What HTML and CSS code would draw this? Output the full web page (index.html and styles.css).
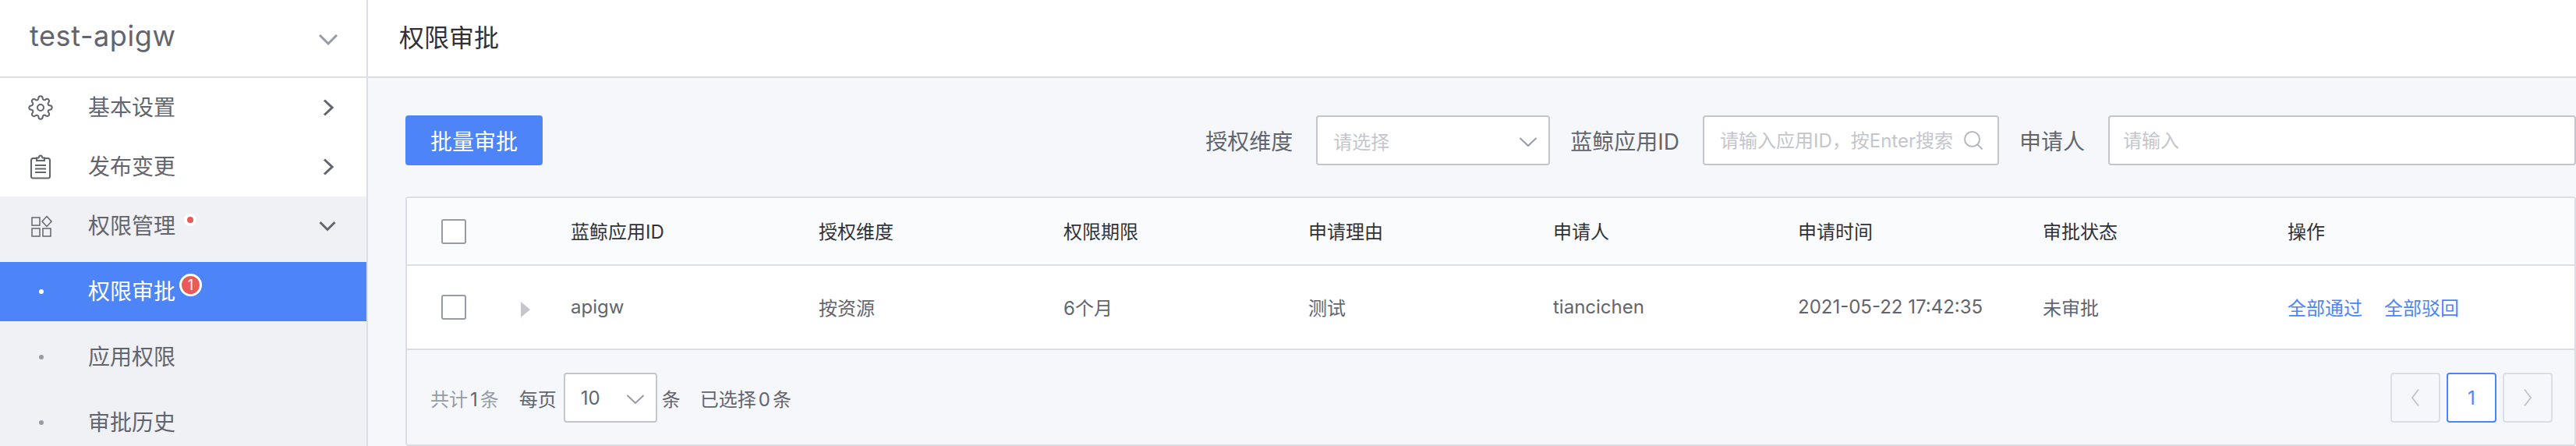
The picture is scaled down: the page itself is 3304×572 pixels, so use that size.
FILE: index.html
```html
<!DOCTYPE html>
<html lang="zh-CN">
<head>
    <meta charset="UTF-8">
    <title>权限审批</title>
    <link rel="stylesheet" href="styles.css">
</head>
<body>
<div class="page">
    <div class="side">
        <div class="side-head">
            <span class="app-name">test-apigw</span>
            <svg class="arrow-head" viewBox="0 0 24 14"><path d="M1 1l11 11L23 1"/></svg>
        </div>
        <div class="menu">
            <div class="menu-item">
                <svg class="menu-icon" viewBox="0 0 24 24"><circle cx="12" cy="12" r="3"/><path d="M19.4 15a1.65 1.65 0 0 0 .33 1.82l.06.06a2 2 0 0 1 0 2.83 2 2 0 0 1-2.83 0l-.06-.06a1.65 1.65 0 0 0-1.82-.33 1.65 1.65 0 0 0-1 1.51V21a2 2 0 0 1-2 2 2 2 0 0 1-2-2v-.09A1.65 1.65 0 0 0 9 19.4a1.65 1.65 0 0 0-1.82.33l-.06.06a2 2 0 0 1-2.83 0 2 2 0 0 1 0-2.83l.06-.06a1.65 1.65 0 0 0 .33-1.82 1.65 1.65 0 0 0-1.51-1H3a2 2 0 0 1-2-2 2 2 0 0 1 2-2h.09A1.65 1.65 0 0 0 4.6 9a1.65 1.65 0 0 0-.33-1.82l-.06-.06a2 2 0 0 1 0-2.83 2 2 0 0 1 2.83 0l.06.06a1.65 1.65 0 0 0 1.82.33H9a1.65 1.65 0 0 0 1-1.51V3a2 2 0 0 1 2-2 2 2 0 0 1 2 2v.09a1.65 1.65 0 0 0 1 1.51 1.65 1.65 0 0 0 1.82-.33l.06-.06a2 2 0 0 1 2.83 0 2 2 0 0 1 0 2.83l-.06.06a1.65 1.65 0 0 0-.33 1.82V9a1.65 1.65 0 0 0 1.51 1H21a2 2 0 0 1 2 2 2 2 0 0 1-2 2h-.09a1.65 1.65 0 0 0-1.51 1z"/></svg>
                <span class="menu-text">基本设置</span>
                <svg class="arrow-right" viewBox="0 0 14 22"><path d="M2 1.5l10 9.5-10 9.5"/></svg>
            </div>
            <div class="menu-item">
                <svg class="menu-icon" viewBox="0 0 32 32"><path d="M11 5H6.5Q4 5 4 7.500V28q0 2.500 2.500 2.500h19Q28 30.500 28 28V7.500Q28 5 25.500 5H21"/><path d="M11 8V4.500h2.500Q14 1.500 16 1.500t2.500 3H21V8z"/><path d="M9 14h14M9 18.500h14M9 23h14"/></svg>
                <span class="menu-text">发布变更</span>
                <svg class="arrow-right" viewBox="0 0 14 22"><path d="M2 1.500l10 9.500-10 9.500"/></svg>
            </div>
            <div class="menu-group">
                <div class="menu-item">
                    <svg class="menu-icon" viewBox="0 0 32 32"><path d="M5 5h10v10H5zM5 19h10v10H5zM19 19h10v10H19zM24 3.500l6 6.500-6 6.500-6-6.500z"/></svg>
                    <span class="menu-text">权限管理<i class="red-dot"></i></span>
                    <svg class="arrow-down" viewBox="0 0 22 14"><path d="M1.500 2l9.500 9.500L20.500 2"/></svg>
                </div>
                <div class="sub-item active">
                    <i class="sub-dot"></i>
                    <span class="menu-text">权限审批<b class="badge">1</b></span>
                </div>
                <div class="sub-item">
                    <i class="sub-dot"></i>
                    <span class="menu-text">应用权限</span>
                </div>
                <div class="sub-item">
                    <i class="sub-dot"></i>
                    <span class="menu-text">审批历史</span>
                </div>
            </div>
        </div>
    </div>
    <div class="main">
        <div class="main-head">权限审批</div>
        <div class="content">
            <div class="tools">
                <button class="btn">批量审批</button>
                <div class="filters">
                    <label class="filter-label">授权维度</label>
                    <div class="select filter-select">
                        <span class="holder">请选择</span>
                        <svg class="select-arrow" viewBox="0 0 24 12"><path d="M1.500 1l10.500 10L22.500 1"/></svg>
                    </div>
                    <label class="filter-label">蓝鲸应用ID</label>
                    <div class="input input-id">
                        <input type="text" placeholder="请输入应用ID，按Enter搜索">
                        <svg class="search" viewBox="0 0 26 26"><circle cx="11.500" cy="11.500" r="9.500"/><path d="M18.500 18.500l6 6"/></svg>
                    </div>
                    <label class="filter-label">申请人</label>
                    <div class="input input-user">
                        <input type="text" placeholder="请输入">
                    </div>
                </div>
            </div>
            <div class="panel">
                <table class="list">
                    <colgroup>
                        <col class="col-check">
                        <col class="col-expand">
                        <col class="col-id">
                        <col class="col-n"><col class="col-n"><col class="col-n">
                        <col class="col-n"><col class="col-n"><col class="col-n">
                        <col>
                    </colgroup>
                    <thead>
                    <tr>
                        <th class="cell-check"><i class="check"></i></th>
                        <th></th>
                        <th>蓝鲸应用ID</th>
                        <th>授权维度</th>
                        <th>权限期限</th>
                        <th>申请理由</th>
                        <th>申请人</th>
                        <th>申请时间</th>
                        <th>审批状态</th>
                        <th>操作</th>
                    </tr>
                    </thead>
                    <tbody>
                    <tr>
                        <td class="cell-check"><i class="check"></i></td>
                        <td class="cell-expand"><i class="tri"></i></td>
                        <td>apigw</td>
                        <td>按资源</td>
                        <td>6个月</td>
                        <td>测试</td>
                        <td>tiancichen</td>
                        <td>2021-05-22 17:42:35</td>
                        <td>未审批</td>
                        <td><a class="link">全部通过</a><a class="link">全部驳回</a></td>
                    </tr>
                    </tbody>
                </table>
                <div class="foot">
                    <span class="total">共计<em>1</em>条</span>
                    <span class="per">每页</span>
                    <div class="select size-select">
                        <span>10</span>
                        <svg class="select-arrow" viewBox="0 0 24 12"><path d="M1.500 1l10.500 10L22.500 1"/></svg>
                    </div>
                    <span class="unit">条</span>
                    <span class="picked">已选择<em>0</em>条</span>
                    <div class="pager">
                        <span class="page-btn"><svg viewBox="0 0 12 24"><path d="M10 1.500L2 12l8 10.500"/></svg></span>
                        <span class="page-btn current">1</span>
                        <span class="page-btn"><svg viewBox="0 0 12 24"><path d="M2 1.500L10 12 2 22.500"/></svg></span>
                    </div>
                </div>
            </div>
        </div>
    </div>
</div>
</body>
</html>
```

FILE: styles.css
```css
*{box-sizing:border-box;}
html,body{margin:0;height:100%;overflow:hidden;}
body{font-family:Inter,"Noto Sans CJK SC",sans-serif;color:#63656e;font-size:24px;background:#f5f7fb;}
em,i,b{font-style:normal;}
svg{fill:none;stroke:currentColor;display:block;}
.page{display:flex;width:3304px;height:572px;overflow:hidden;}

/* side menu */
.side{width:472px;flex:none;height:100%;background:#fff;border-right:2px solid #dcdee5;}
.side-head{height:100px;border-bottom:2px solid #dcdee5;display:flex;align-items:center;justify-content:space-between;padding:0 37px 6px 38px;font-size:36px;color:#63656e;}
.app-name{letter-spacing:.6px;}
.arrow-head{width:24px;height:14px;stroke:#979ba5;stroke-width:3;margin-top:10px;}
.menu-item{height:76px;display:flex;align-items:center;position:relative;padding-left:36px;}
.menu-icon{width:32px;height:32px;flex:none;stroke-width:2;}
.menu-item .menu-icon{stroke:#63656e;}
.menu-item:nth-child(1) .menu-icon{stroke-width:1.500;}
.menu-text{font-size:28px;line-height:40px;margin-left:45px;position:relative;}
.arrow-right{width:14px;height:22px;position:absolute;left:414px;top:27px;stroke-width:3;stroke:#63656e;}
.arrow-down{width:22px;height:14px;position:absolute;left:409px;top:31px;stroke-width:3;stroke:#63656e;}
.menu-group{background:#f0f1f5;height:320px;}
.menu-group .menu-item{margin-bottom:8px;}
.sub-item{height:76px;margin-bottom:8px;display:flex;align-items:center;padding-left:50px;}
.sub-item .menu-text{margin-left:57px;}
.sub-dot{width:6px;height:6px;border-radius:50%;background:#979ba5;flex:none;}
.sub-item.active{background:#4d85f9;color:#fff;}
.active .sub-dot{background:#fff;}
.red-dot{position:absolute;left:123px;top:4px;width:16px;height:16px;border-radius:50%;background:#ea5b58;border:4px solid #fff;}
.badge{position:absolute;left:117px;top:-3px;width:29px;height:29px;border-radius:50%;background:#ea5b58;border:3px solid #fff;color:#fff;font-size:18px;font-weight:400;line-height:23px;text-align:center;}

/* main */
.main{flex:1;min-width:0;}
.main-head{height:100px;background:#fff;border-bottom:2px solid #dcdee5;padding:0 40px 6px;display:flex;align-items:center;font-size:32px;color:#313238;}
.content{padding:48px 0 0 48px;}
.tools{display:flex;justify-content:space-between;height:64px;}
.btn{width:176px;height:64px;border:0;border-radius:4px;background:#4d85f9;color:#fff;font:inherit;font-size:28px;padding:0;}
.filters{display:flex;align-items:center;}
.filter-label{font-size:28px;margin:0 30px 0 26px;}
.select,.input{height:64px;border:2px solid #c4c6cc;border-radius:4px;background:#fff;position:relative;display:flex;align-items:center;}
.filter-select{width:300px;padding-left:20px;}
.holder{color:#c4c6cc;}
.select-arrow{width:24px;height:12px;stroke:#979ba5;stroke-width:2;position:absolute;right:14px;top:26px;}
.input input{border:0;outline:0;width:100%;height:100%;background:none;padding:0 0 0 20px;font:inherit;font-size:24px;color:#63656e;}
.input input::placeholder{color:#c4c6cc;opacity:1;}
.input-id{width:380px;}
.input-user{width:600px;}
.input-user input{padding-left:17px;}
.search{width:26px;height:26px;flex:none;margin-right:18px;stroke:#b4b7bf;stroke-width:2;}

/* table */
.panel{margin-top:40px;height:320px;border:2px solid #dcdee5;border-radius:4px;background:#f5f7fb;}
.list{width:100%;table-layout:fixed;border-collapse:collapse;background:#fff;}
.col-check{width:100px;}
.col-expand{width:80px;}
.col-id{width:318px;}
.col-n{width:314px;}
.list th{height:86px;background:#fafbfd;border-bottom:2px solid #dcdee5;font-weight:400;color:#313238;text-align:left;padding:0 0 2px 30px;}
.list td{height:108px;border-bottom:2px solid #dcdee5;padding:0 0 2px 30px;white-space:nowrap;}
.list .cell-check{padding:0 0 0 44px;}
.list .cell-expand{padding:0 0 0 46px;}
.check{display:block;width:32px;height:32px;border:2px solid #979ba5;border-radius:3px;background:#fff;}
.tri{display:block;width:0;height:0;border-left:12px solid #c4c6cc;border-top:10px solid transparent;border-bottom:10px solid transparent;margin-top:6px;}
.link{color:#4d85f9;margin-right:28px;}
.foot{height:122px;display:flex;align-items:center;padding:0 28px 0 30px;}
.total{color:#979ba5;margin-right:26px;}
.total em,.picked em{color:#63656e;margin:0 3px;}
.per{margin-right:9px;}
.size-select{width:120px;padding-left:20px;border-color:#c4c6cc;}
.unit{margin:0 25px 0 6px;}
.pager{margin-left:auto;display:flex;gap:8px;}
.page-btn{width:64px;height:64px;border:2px solid #dcdee5;border-radius:4px;display:flex;align-items:center;justify-content:center;color:#c4c6cc;}
.page-btn svg{width:12px;height:24px;stroke-width:2;}
.page-btn.current{border-color:#4d85f9;background:#fff;color:#4d85f9;}
```
